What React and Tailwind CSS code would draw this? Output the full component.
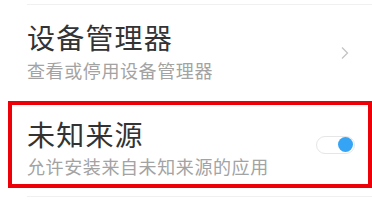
import React from 'react';

const Chevron = () => (
  <svg width="10" height="14" viewBox="0 0 10 14" fill="none">
    <path d="M2 1.5 L7.5 7 L2 12.5" stroke="#c4c4c4" strokeWidth="1.3" />
  </svg>
);

const Toggle = ({ on }) => (
  <div className="w-[39px] h-[18px] rounded-full border border-[#e6e6e6] bg-white flex items-center justify-end px-[1px]">
    {on && <div className="w-[15px] h-[15px] rounded-full bg-[#35a4f4]" />}
  </div>
);

const App = () => {
  return (
    <div className="w-[372px] h-[211px] bg-white overflow-hidden font-['Noto_Sans_CJK_SC',sans-serif]">
      <div className="pt-[4px]">
        <div className="ml-[27px] h-px bg-[#f0f0f0]" />
      </div>

      <div className="h-[96px] pl-[27px] pr-[22px] flex items-center justify-between">
        <div className="flex flex-col -mt-[4px]">
          <div className="text-[28px] leading-[34px] text-[#333] tracking-[1.2px]">设备管理器</div>
          <div className="text-[18px] leading-[24px] text-[#a3a3a3] tracking-[0.6px] mt-[4px]">查看或停用设备管理器</div>
        </div>
        <Chevron />
      </div>

      <div className="ml-[8px] h-[87px] border-[4px] border-[#ee0008] pl-[15px] pr-[13px] flex items-center justify-between">
        <div className="flex flex-col mt-[6px]">
          <div className="text-[28px] leading-[34px] text-[#333] tracking-[1.2px]">未知来源</div>
          <div className="text-[18px] leading-[24px] text-[#a3a3a3] tracking-[0.6px] mt-[3px]">允许安装来自未知来源的应用</div>
        </div>
        <Toggle on />
      </div>

      <div className="mt-[8px] ml-[27px] h-px bg-[#f0f0f0]" />
    </div>
  );
};

export default App;
